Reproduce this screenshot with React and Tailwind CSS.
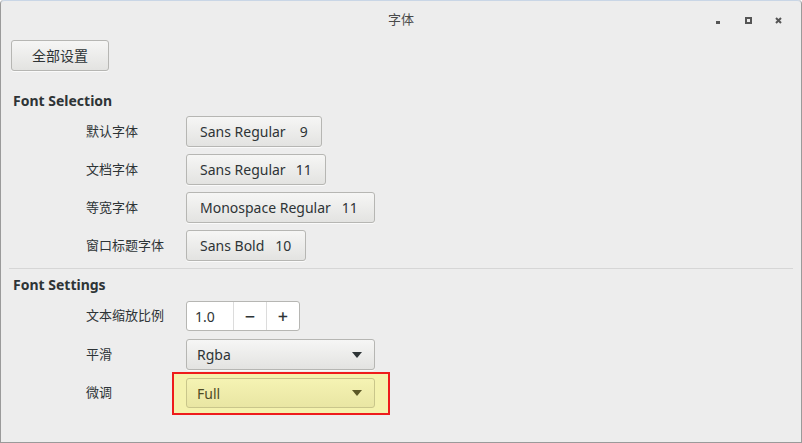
import React from "react";

const sans = { fontFamily: '"Noto Sans", "Noto Sans CJK SC", sans-serif' };

function Btn({ children, className = "" }) {
  return (
    <div
      className={
        "flex items-center h-[31px] px-[13px] rounded-[3px] border border-[#b6b6b3] bg-gradient-to-b from-[#f6f6f5] to-[#e3e3e1] text-[14px] text-[#2e3436] shadow-[0_1px_0_rgba(255,255,255,0.7)] " +
        className
      }
    >
      {children}
    </div>
  );
}

function Row({ label, children }) {
  return (
    <div className="flex items-center">
      <div className="w-[100px] text-[13px] text-[#2e3436]">{label}</div>
      {children}
    </div>
  );
}

function Arrow({ color = "#2e3436" }) {
  return (
    <svg width="10" height="6" viewBox="0 0 10 6">
      <path d="M0 0h10L5 6z" fill={color} />
    </svg>
  );
}

export default function App() {
  return (
    <div
      className="w-[802px] h-[443px] bg-[#ededed] border border-t-0 border-[#9a9a9a] rounded-t-[4px] flex flex-col"
      style={sans}
    >
      {/* Title bar */}
      <div className="relative h-[39px] flex items-center justify-center border-t border-[#c9d6e6] rounded-t-[4px]">
        <span className="text-[13px] text-[#4a4a4a]">字体</span>
        <div className="absolute right-0 top-0 h-full flex items-center">
          <div className="w-[30px] h-full flex items-center justify-center">
            <div className="w-[4px] h-[3px] bg-[#555] mt-[4px]" />
          </div>
          <div className="w-[30px] h-full flex items-center justify-center">
            <div className="w-[7px] h-[7px] border-2 border-[#555]" />
          </div>
          <div className="w-[30px] h-full flex items-center justify-center mr-[8px]">
            <svg width="7" height="7" viewBox="0 0 7 7">
              <path d="M1 1l5 5M6 1L1 6" stroke="#555" strokeWidth="2" />
            </svg>
          </div>
        </div>
      </div>

      {/* Content */}
      <div className="flex flex-col px-[10px] pt-[1px]">
        <div className="flex">
          <Btn className="w-[98px] justify-center text-[13px]">全部设置</Btn>
        </div>

        <div className="mt-[20px] pl-[2px] text-[14px] font-bold text-[#2e3436] leading-[20px]">
          Font Selection
        </div>

        <div className="flex flex-col gap-[7px] mt-[5px] pl-[75px]">
          <Row label="默认字体">
            <Btn>
              Sans Regular<span className="ml-[14px]">9</span>
            </Btn>
          </Row>
          <Row label="文档字体">
            <Btn>
              Sans Regular<span className="ml-[10px]">11</span>
            </Btn>
          </Row>
          <Row label="等宽字体">
            <Btn className="pr-[16px]">
              Monospace Regular<span className="ml-[11px]">11</span>
            </Btn>
          </Row>
          <Row label="窗口标题字体">
            <Btn className="pr-[14px]">
              Sans Bold<span className="ml-[11px]">10</span>
            </Btn>
          </Row>
        </div>

        <div className="mt-[7px] -mx-[2px] border-t border-[#d6d6d6]" />

        <div className="mt-[6px] pl-[2px] text-[14px] font-bold text-[#2e3436] leading-[20px]">
          Font Settings
        </div>

        <div className="flex flex-col gap-[8px] mt-[6px] pl-[75px]">
          <Row label="文本缩放比例">
            <div className="flex h-[30px] rounded-[3px] border border-[#b6b6b3] bg-white text-[14px] text-[#2e3436] overflow-hidden">
              <div className="w-[46px] pl-[8px] flex items-center">1.0</div>
              <div className="w-[33px] border-l border-[#dcdcdc] flex items-center justify-center text-[18px] font-medium">
                −
              </div>
              <div className="w-[33px] border-l border-[#dcdcdc] flex items-center justify-center text-[18px] font-medium">
                +
              </div>
            </div>
          </Row>
          <Row label="平滑">
            <Btn className="w-[189px] h-[30px] justify-between pl-[10px] pr-[12px]">
              <span>Rgba</span>
              <Arrow />
            </Btn>
          </Row>
          <Row label="微调">
            <div className="relative">
              <div className="absolute -left-[14px] -right-[15px] -top-[6px] -bottom-[7px] border-2 border-[#ee1c1c] bg-[#f4f2ae]" />
              <div className="relative flex items-center justify-between w-[189px] h-[30px] pl-[10px] pr-[12px] rounded-[3px] border border-[#c9c68b] bg-gradient-to-b from-[#f5f3b3] to-[#e9e6a3] text-[14px] text-[#4f4b25]">
                <span>Full</span>
                <Arrow color="#5c5826" />
              </div>
            </div>
          </Row>
        </div>
      </div>
    </div>
  );
}
